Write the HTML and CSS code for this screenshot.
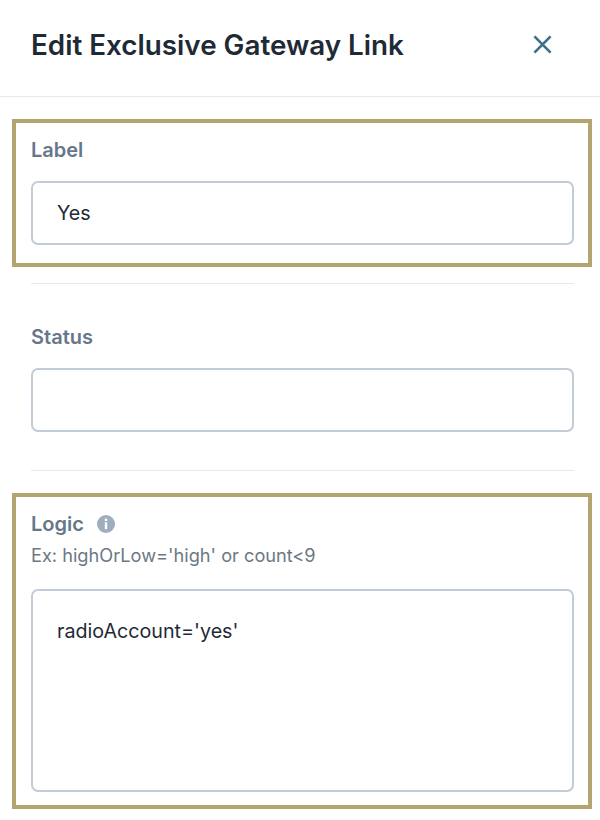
FILE: index.html
```html
<!DOCTYPE html>
<html>
<head>
    <meta charset="UTF-8">
    <title>Edit Exclusive Gateway Link</title>
    <link rel="stylesheet" href="styles.css">
</head>
<body>
    <div class="panel">
        <div class="header">
            <h1 class="title">Edit Exclusive Gateway Link</h1>
            <svg class="close" viewBox="0 0 20 20" fill="none" stroke="currentColor" stroke-width="2.8" aria-label="Close">
                <path d="M1.5 1.5L18.5 18.5M18.5 1.5L1.5 18.5"/>
            </svg>
        </div>

        <div class="field marked">
            <div class="label">Label</div>
            <div class="input">Yes</div>
        </div>
        <div class="divider"></div>

        <div class="field">
            <div class="label">Status</div>
            <div class="input"></div>
        </div>
        <div class="divider"></div>

        <div class="field marked logic">
            <div class="label-row">
                <div class="label">Logic</div>
                <svg class="info" viewBox="0 0 18 18">
                    <circle cx="9" cy="9" r="9" fill="#9fadbc"/>
                    <rect x="7.8" y="3.6" width="2.4" height="2.4" fill="#fff"/>
                    <rect x="7.8" y="7.2" width="2.4" height="7" fill="#fff"/>
                </svg>
            </div>
            <div class="hint">Ex: highOrLow='high' or count&lt;9</div>
            <div class="input textarea">radioAccount='yes'</div>
        </div>
    </div>
</body>
</html>
```
FILE: styles.css
```css
body {
    margin: 0;
    padding: 0;
    background-color: #fff;
    font-family: Inter, "Liberation Sans", sans-serif;
}
div.panel {
    width: 600px;
}
div.header {
    display: flex;
    align-items: center;
    justify-content: space-between;
    box-sizing: border-box;
    height: 97px;
    padding: 0 48px 7px 31px;
    border-bottom: 1px solid #e7e9ec;
}
h1.title {
    margin: 0;
    color: #1f2a37;
    font-size: 27.8px;
    font-weight: 600;
    line-height: 32px;
}
svg.close {
    width: 19px;
    height: 19px;
    color: #3b7189;
}
div.field {
    margin: 22px 8px 0 12px;
    padding: 15px 14px 18px 15px;
    border: 4px solid transparent;
}
div.marked {
    border-color: #b3a570;
}
div.logic {
    padding-bottom: 13px;
}
div.label-row {
    display: flex;
    align-items: center;
    gap: 13px;
}
div.label {
    color: #66778a;
    font-size: 20px;
    font-weight: 600;
    line-height: 24px;
}
svg.info {
    width: 18px;
    height: 18px;
}
div.hint {
    margin-top: 8px;
    color: #6b7885;
    font-size: 18.2px;
    line-height: 22px;
}
div.input {
    box-sizing: border-box;
    height: 64px;
    margin-top: 19px;
    padding: 0 24px;
    border: 2px solid #c2cbd6;
    border-radius: 7px;
    color: #1f2a37;
    font-size: 19.7px;
    line-height: 60px;
}
div.textarea {
    height: 203px;
    margin-top: 23px;
    padding-top: 10px;
    line-height: 60px;
}
div.divider {
    height: 1px;
    margin: 16px 26px 0 31px;
    background-color: #e7e9ec;
}
```
